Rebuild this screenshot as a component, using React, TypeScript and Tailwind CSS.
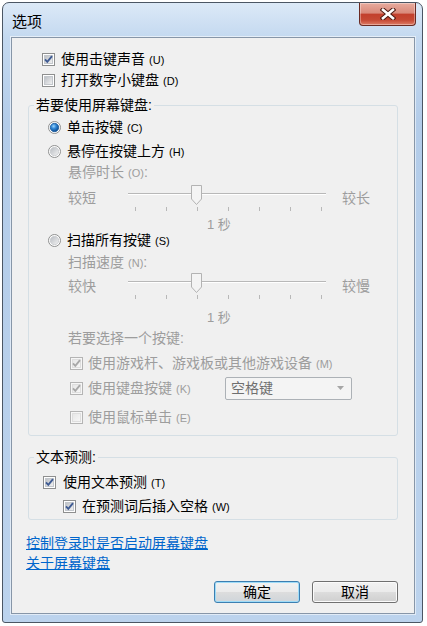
import React from 'react';

const FONT = "font-['Liberation_Sans','Noto_Sans_CJK_SC',sans-serif]";
const GREY = 'text-[#9d9d9d]';

function Check({ checked, disabled }: { checked?: boolean; disabled?: boolean }) {
  const stroke = disabled ? '#b4b4b4' : '#8e8f8f';
  return (
    <svg width="13" height="13" viewBox="0 0 13 13" className="shrink-0">
      <defs>
        <linearGradient id="cbEn" x1="0" y1="0" x2="1" y2="1">
          <stop offset="0" stopColor="#b9bdc3" />
          <stop offset="1" stopColor="#f4f4f4" />
        </linearGradient>
        <linearGradient id="cbDis" x1="0" y1="0" x2="1" y2="1">
          <stop offset="0" stopColor="#e6e6e6" />
          <stop offset="1" stopColor="#f7f7f7" />
        </linearGradient>
      </defs>
      <rect x="0.5" y="0.5" width="12" height="12" fill={disabled ? '#f6f6f6' : '#fff'} stroke={stroke} />
      <rect x="2.5" y="2.5" width="8" height="8" fill={disabled ? 'url(#cbDis)' : 'url(#cbEn)'} stroke={disabled ? '#dedede' : '#c3c7cc'} />
      {checked && (
        <path
          d="M3 6.3 L5.3 8.8 L10 3.2"
          fill="none"
          stroke={disabled ? '#a8a8a8' : '#3f5b93'}
          strokeWidth="1.9"
        />
      )}
    </svg>
  );
}

function Radio({ checked }: { checked?: boolean }) {
  return (
    <svg width="13" height="13" viewBox="0 0 13 13" className="shrink-0">
      <defs>
        <linearGradient id="rbEn" x1="0" y1="0" x2="1" y2="1">
          <stop offset="0" stopColor="#b7bbc1" />
          <stop offset="1" stopColor="#f3f3f3" />
        </linearGradient>
        <radialGradient id="rbDot" cx="0.4" cy="0.35" r="0.65">
          <stop offset="0" stopColor="#9fd6fb" />
          <stop offset="0.45" stopColor="#2f86d6" />
          <stop offset="1" stopColor="#0c4a8e" />
        </radialGradient>
      </defs>
      <circle cx="6.5" cy="6.5" r="6" fill="#fff" stroke="#8e8f8f" />
      <circle cx="6.5" cy="6.5" r="4.2" fill={checked ? 'url(#rbDot)' : 'url(#rbEn)'} stroke={checked ? '#1c5a9c' : '#c6c9cd'} strokeWidth="0.8" />
    </svg>
  );
}

function Slider({ left, right }: { left: string; right: string }) {
  return (
    <div className={`flex h-[29px] pl-[39px] ${GREY}`}>
      <span className="mt-[4px] h-[20px] w-[60px] leading-[20px]">{left}</span>
      <div className="relative flex h-[29px] w-[198px] flex-col">
        <div className="mt-[9px] h-px bg-[#b8b8b8]" />
        <div className="h-px bg-white" />
        <div className="ml-[7px] mt-[12px] flex w-[187px] justify-between">
          {[0, 1, 2, 3, 4, 5, 6].map((i) => (
            <span key={i} className="h-[4px] w-px bg-[#b8b8b8]" />
          ))}
        </div>
        <svg width="11" height="20" viewBox="0 0 11 20" className="absolute left-[63px] top-[1px]">
          <path d="M0.5 0.5 H10.5 V14 L5.5 19.5 L0.5 14 Z" fill="#f4f4f4" stroke="#b3b3b3" />
        </svg>
      </div>
      <span className="ml-[16px] mt-[4px] h-[20px] leading-[20px]">{right}</span>
    </div>
  );
}

function Key({ k }: { k: string }) {
  return <span className="ml-[4px] text-[11px]">({k})</span>;
}

function WinButton({ label, primary }: { label: string; primary?: boolean }) {
  return (
    <button
      className={`flex h-[22px] w-[86px] items-center justify-center rounded-[3px] border text-[14px] leading-[18px] text-black ${
        primary
          ? 'border-[#3c7fb1] bg-[linear-gradient(to_bottom,#f2f2f2_0%,#ebebeb_50%,#dddddd_51%,#cfd5da_100%)] shadow-[inset_0_0_0_1px_#9fdcf8]'
          : 'border-[#707070] bg-[linear-gradient(to_bottom,#f2f2f2_0%,#ebebeb_50%,#dddddd_51%,#cfcfcf_100%)] shadow-[inset_0_0_0_1px_#fbfbfb]'
      }`}
    >
      {label}
    </button>
  );
}

export default function App() {
  return (
    <div className={`h-[626px] w-[427px] bg-white pl-[2px] pt-[2px] ${FONT} text-[14px] text-black`}>
      <div className="flex h-[621px] w-[421px] flex-col rounded-b-[3px] rounded-t-[7px] border border-[#4b5664] bg-[linear-gradient(to_bottom,#dce9f7_0px,#c4d9f0_34px,#b3cce9_120px,#bcd3ed_100%)]">
        {/* title bar */}
        <div className="flex h-[34px] items-start">
          <span className="pl-[9px] pt-[9px] text-[15px] leading-[20px]">选项</span>
          <div className="ml-auto mr-[6px] flex h-[23px] w-[57px] items-center justify-center rounded-b-[4px] border border-t-0 border-[#6a2a22] bg-[linear-gradient(to_bottom,#e8ab9e_0%,#d98a7b_45%,#c2402d_52%,#c64a35_78%,#de7d66_100%)] shadow-[inset_0_0_0_1px_rgba(255,255,255,0.35)]">
            <svg width="16" height="12" viewBox="0 0 16 12">
              <path d="M3 1.8 L13 10.2 M13 1.8 L3 10.2" stroke="#4a1810" strokeWidth="4.6" strokeLinecap="square" />
              <path d="M3 1.8 L13 10.2 M13 1.8 L3 10.2" stroke="#ffffff" strokeWidth="2.6" strokeLinecap="square" />
            </svg>
          </div>
        </div>

        {/* client area */}
        <div className="ml-[8px] flex h-[577px] w-[404px] flex-col border border-[#8796a8] bg-[#f0f0f0] shadow-[0_0_0_1px_rgba(255,255,255,0.55)]">
          <div className="mt-[11px] flex h-[21px] items-center pl-[30px]">
            <Check checked />
            <span className="ml-[6px] leading-[20px]">使用击键声音<Key k="U" /></span>
          </div>
          <div className="flex h-[21px] items-center pl-[30px]">
            <Check />
            <span className="ml-[6px] leading-[20px]">打开数字小键盘<Key k="D" /></span>
          </div>

          {/* on-screen keyboard group */}
          <div className="mx-[16px] mt-[14px] flex flex-col rounded-[3px] border border-[#d5dfe5] pb-[8px]">
            <span className="-mt-[9px] ml-[5px] h-[16px] w-fit bg-[#f0f0f0] px-[2px] leading-[16px]">若要使用屏幕键盘:</span>

            <div className="mt-[3px] flex h-[22px] items-center pl-[19px]">
              <Radio checked />
              <span className="ml-[6px] leading-[20px]">单击按键<Key k="C" /></span>
            </div>
            <div className="mt-[2px] flex h-[22px] items-center pl-[19px]">
              <Radio />
              <span className="ml-[6px] leading-[20px]">悬停在按键上方<Key k="H" /></span>
            </div>
            <div className={`flex h-[20px] items-center pl-[39px] ${GREY}`}>
              <span className="leading-[20px]">悬停时长<Key k="O" />:</span>
            </div>
            <div className="mt-[2px]">
              <Slider left="较短" right="较长" />
            </div>
            <div className={`mt-[4px] h-[16px] pl-[178px] text-[13px] leading-[16px] ${GREY}`}>1 秒</div>

            <div className="flex h-[14px] items-center pl-[19px]">
              <Radio />
              <span className="ml-[6px] leading-[14px]">扫描所有按键<Key k="S" /></span>
            </div>
            <div className={`mt-[7px] flex h-[16px] items-center pl-[39px] ${GREY}`}>
              <span className="leading-[16px]">扫描速度<Key k="N" />:</span>
            </div>
            <div className="mt-[2px]">
              <Slider left="较快" right="较慢" />
            </div>
            <div className={`mt-[9px] h-[16px] pl-[178px] text-[13px] leading-[16px] ${GREY}`}>1 秒</div>

            <div className={`mt-[4px] h-[16px] pl-[39px] leading-[16px] ${GREY}`}>若要选择一个按键:</div>
            <div className={`mt-[7px] flex h-[20px] items-center pl-[41px] ${GREY}`}>
              <Check checked disabled />
              <span className="ml-[5px] leading-[20px]">使用游戏杆、游戏板或其他游戏设备<Key k="M" /></span>
            </div>
            <div className={`mt-[3px] flex h-[24px] items-center pl-[41px] ${GREY}`}>
              <Check checked disabled />
              <span className="ml-[5px] w-[137px] leading-[20px]">使用键盘按键<Key k="K" /></span>
              <div className="flex h-[23px] w-[127px] items-center rounded-[2px] border border-[#acb1b6] bg-[#f4f4f4] pl-[5px] pr-[7px]">
                <span className="leading-[20px] text-[#6f6f6f]">空格键</span>
                <svg width="7" height="4" viewBox="0 0 7 4" className="ml-auto">
                  <path d="M0 0 H7 L3.5 4 Z" fill="#a6a6a6" />
                </svg>
              </div>
            </div>
            <div className={`mt-[7px] flex h-[20px] items-center pl-[41px] ${GREY}`}>
              <Check disabled />
              <span className="ml-[5px] leading-[20px]">使用鼠标单击<Key k="E" /></span>
            </div>
          </div>

          {/* text prediction group */}
          <div className="mx-[16px] mt-[21px] flex flex-col rounded-[3px] border border-[#d5dfe5] pb-[3px]">
            <span className="-mt-[9px] ml-[5px] h-[16px] w-fit bg-[#f0f0f0] px-[2px] leading-[16px]">文本预测:</span>
            <div className="mt-[7px] flex h-[20px] items-center pl-[14px]">
              <Check checked />
              <span className="ml-[7px] leading-[20px]">使用文本预测<Key k="T" /></span>
            </div>
            <div className="mt-[4px] flex h-[20px] items-center pl-[34px]">
              <Check checked />
              <span className="ml-[6px] leading-[20px]">在预测词后插入空格<Key k="W" /></span>
            </div>
          </div>

          <a className="ml-[14px] mt-[13px] h-[20px] w-fit leading-[20px] text-[#0066cc] underline">控制登录时是否启动屏幕键盘</a>
          <a className="ml-[14px] h-[20px] w-fit leading-[20px] text-[#0066cc] underline">关于屏幕键盘</a>

          <div className="mt-[8px] flex justify-end gap-[12px] pr-[16px]">
            <WinButton label="确定" primary />
            <WinButton label="取消" />
          </div>
        </div>
      </div>
    </div>
  );
}
